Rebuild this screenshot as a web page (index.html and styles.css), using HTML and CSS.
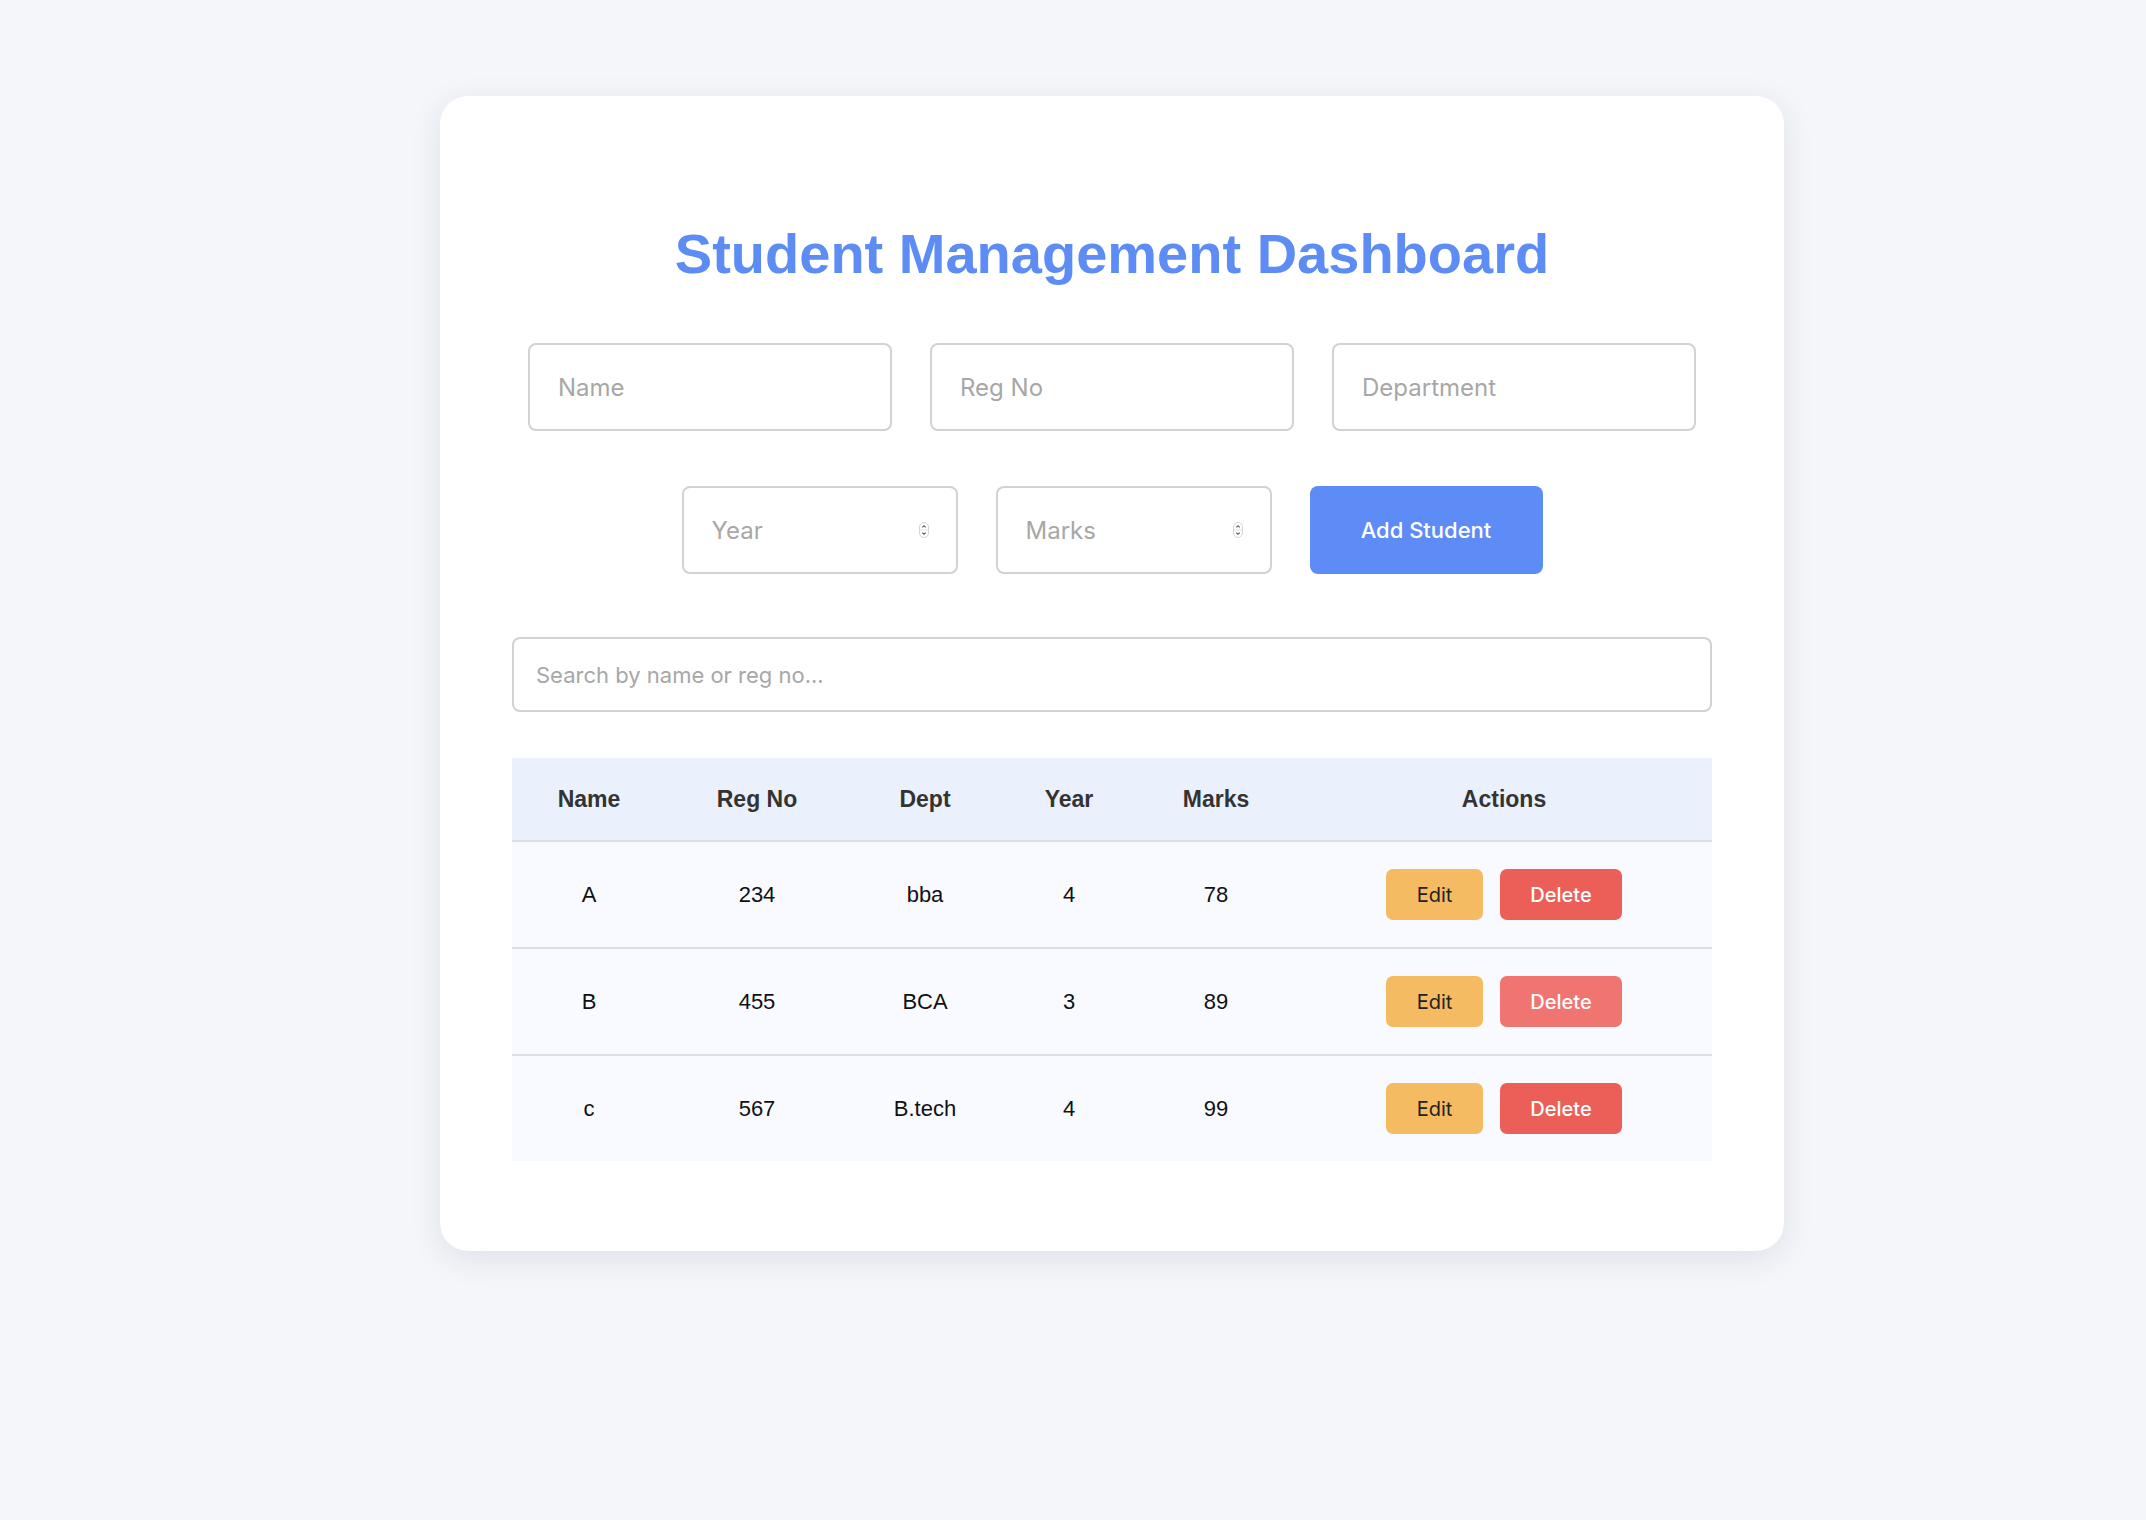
FILE: index.html
```html
<!DOCTYPE html>
<html lang="en">
<head>
<meta charset="utf-8">
<title>Student Management Dashboard</title>
<link rel="stylesheet" href="styles.css">
</head>
<body>
<div class="page">
  <main class="card">
    <h1 class="title">Student Management Dashboard</h1>

    <div class="form-row form-row--top">
      <input class="field" type="text" placeholder="Name">
      <input class="field" type="text" placeholder="Reg No">
      <input class="field" type="text" placeholder="Department">
    </div>

    <div class="form-row form-row--bottom">
      <label class="numfield">
        <input class="numfield__input" type="number" placeholder="Year">
        <svg class="spinner" width="10" height="16" viewBox="0 0 10 16" aria-hidden="true">
          <rect x="0.5" y="0.5" width="9" height="15" rx="4.5" fill="#fff" stroke="#d4d4d4"/>
          <line x1="1" y1="8" x2="9" y2="8" stroke="#e2e2e2" stroke-width="1"/>
          <path d="M3.3 5.4 L5 3.7 L6.7 5.4" fill="none" stroke="#555" stroke-width="1.1"/>
          <path d="M3.3 10.6 L5 12.3 L6.7 10.6" fill="none" stroke="#555" stroke-width="1.1"/>
        </svg>
      </label>
      <label class="numfield">
        <input class="numfield__input" type="number" placeholder="Marks">
        <svg class="spinner" width="10" height="16" viewBox="0 0 10 16" aria-hidden="true">
          <rect x="0.5" y="0.5" width="9" height="15" rx="4.5" fill="#fff" stroke="#d4d4d4"/>
          <line x1="1" y1="8" x2="9" y2="8" stroke="#e2e2e2" stroke-width="1"/>
          <path d="M3.3 5.4 L5 3.7 L6.7 5.4" fill="none" stroke="#555" stroke-width="1.1"/>
          <path d="M3.3 10.6 L5 12.3 L6.7 10.6" fill="none" stroke="#555" stroke-width="1.1"/>
        </svg>
      </label>
      <button class="btn-add" type="button">Add Student</button>
    </div>

    <input class="search" type="text" placeholder="Search by name or reg no...">

    <table class="students">
      <colgroup>
        <col class="col-name">
        <col class="col-reg">
        <col class="col-dept">
        <col class="col-year">
        <col class="col-marks">
        <col class="col-actions">
      </colgroup>
      <thead>
        <tr>
          <th>Name</th>
          <th>Reg No</th>
          <th>Dept</th>
          <th>Year</th>
          <th>Marks</th>
          <th>Actions</th>
        </tr>
      </thead>
      <tbody>
        <tr>
          <td>A</td>
          <td>234</td>
          <td>bba</td>
          <td>4</td>
          <td>78</td>
          <td><div class="actions"><button class="btn-edit" type="button">Edit</button><button class="btn-delete" type="button">Delete</button></div></td>
        </tr>
        <tr>
          <td>B</td>
          <td>455</td>
          <td>BCA</td>
          <td>3</td>
          <td>89</td>
          <td><div class="actions"><button class="btn-edit" type="button">Edit</button><button class="btn-delete btn-delete--hover" type="button">Delete</button></div></td>
        </tr>
        <tr>
          <td>c</td>
          <td>567</td>
          <td>B.tech</td>
          <td>4</td>
          <td>99</td>
          <td><div class="actions"><button class="btn-edit" type="button">Edit</button><button class="btn-delete" type="button">Delete</button></div></td>
        </tr>
      </tbody>
    </table>
  </main>
</div>
</body>
</html>
```
FILE: styles.css
```css
* {
  box-sizing: border-box;
}

html, body {
  margin: 0;
  padding: 0;
}

body {
  background: #f4f6fa;
  min-height: 100vh;
  font-family: "Liberation Sans", Arial, sans-serif;
}

.page {
  display: flex;
  justify-content: center;
  padding: 96px 0 0 78px;
}

.card {
  width: 1344px;
  background: #ffffff;
  border-radius: 28px;
  padding: 125px 72px 90px;
  box-shadow: 0 8px 32px rgba(30, 40, 70, 0.1);
}

.title {
  margin: 0 0 57px;
  text-align: center;
  font-family: "Liberation Sans", Arial, sans-serif;
  font-weight: 700;
  font-size: 56px;
  line-height: normal;
  color: #5d8df4;
}

.form-row {
  display: flex;
  justify-content: center;
  gap: 38px;
}

.form-row--top {
  margin-bottom: 55px;
}

.form-row--bottom {
  margin-bottom: 63px;
}

.field,
.numfield,
.search {
  border: 2px solid #d2d2d2;
  border-radius: 8px;
  background: #fff;
  font-family: Inter, "Noto Sans", sans-serif;
  color: #222;
}

.field {
  width: 364px;
  height: 88px;
  padding: 0 28px;
  font-size: 24px;
  outline: none;
}

.field::placeholder,
.numfield__input::placeholder,
.search::placeholder {
  color: #a7a7a7;
  opacity: 1;
}

.numfield {
  width: 276px;
  height: 88px;
  display: flex;
  align-items: center;
  padding: 0 27px 0 28px;
}

.numfield__input {
  flex: 1;
  min-width: 0;
  border: none;
  outline: none;
  background: transparent;
  padding: 0;
  font-family: Inter, "Noto Sans", sans-serif;
  font-size: 24px;
  color: #222;
  -moz-appearance: textfield;
}

.numfield__input::-webkit-inner-spin-button,
.numfield__input::-webkit-outer-spin-button {
  -webkit-appearance: none;
  margin: 0;
}

.spinner {
  flex: none;
  display: block;
}

.btn-add {
  width: 233px;
  height: 88px;
  border: none;
  border-radius: 8px;
  background: #5e8cf6;
  color: #fff;
  font-family: Inter, "Noto Sans", sans-serif;
  font-weight: 500;
  font-size: 22px;
  cursor: pointer;
}

.search {
  display: block;
  width: 100%;
  height: 75px;
  padding: 0 22px;
  font-size: 22px;
  outline: none;
  margin-bottom: 46px;
}

.students {
  width: 100%;
  table-layout: fixed;
  border-collapse: separate;
  border-spacing: 0;
  font-family: "Liberation Sans", Arial, sans-serif;
}

.col-name { width: 154px; }
.col-reg { width: 182px; }
.col-dept { width: 154px; }
.col-year { width: 134px; }
.col-marks { width: 160px; }
.col-actions { width: 416px; }

.students th {
  background: #eaf0fc;
  color: #333;
  font-weight: 700;
  font-size: 23px;
  line-height: 26px;
  padding: 28px 0;
  text-align: center;
  border-bottom: 2px solid #dedfe2;
}

.students td {
  background: #f8faff;
  color: #111;
  font-size: 22px;
  line-height: 26px;
  padding: 27px 0;
  text-align: center;
  vertical-align: middle;
  border-bottom: 2px solid #dedfe2;
}

.students tbody tr:last-child td {
  border-bottom: none;
}

.actions {
  display: flex;
  justify-content: center;
  gap: 17px;
}

.btn-edit,
.btn-delete {
  height: 51px;
  border: none;
  border-radius: 7px;
  font-family: Inter, "Noto Sans", sans-serif;
  font-size: 20px;
  font-weight: 500;
  cursor: pointer;
}

.btn-edit {
  width: 97px;
  background: #f4bb62;
  color: #222;
  font-weight: 400;
}

.btn-delete {
  width: 122px;
  background: #ec5f58;
  color: #fff;
}

.btn-delete--hover {
  background: #f07570;
}
```
